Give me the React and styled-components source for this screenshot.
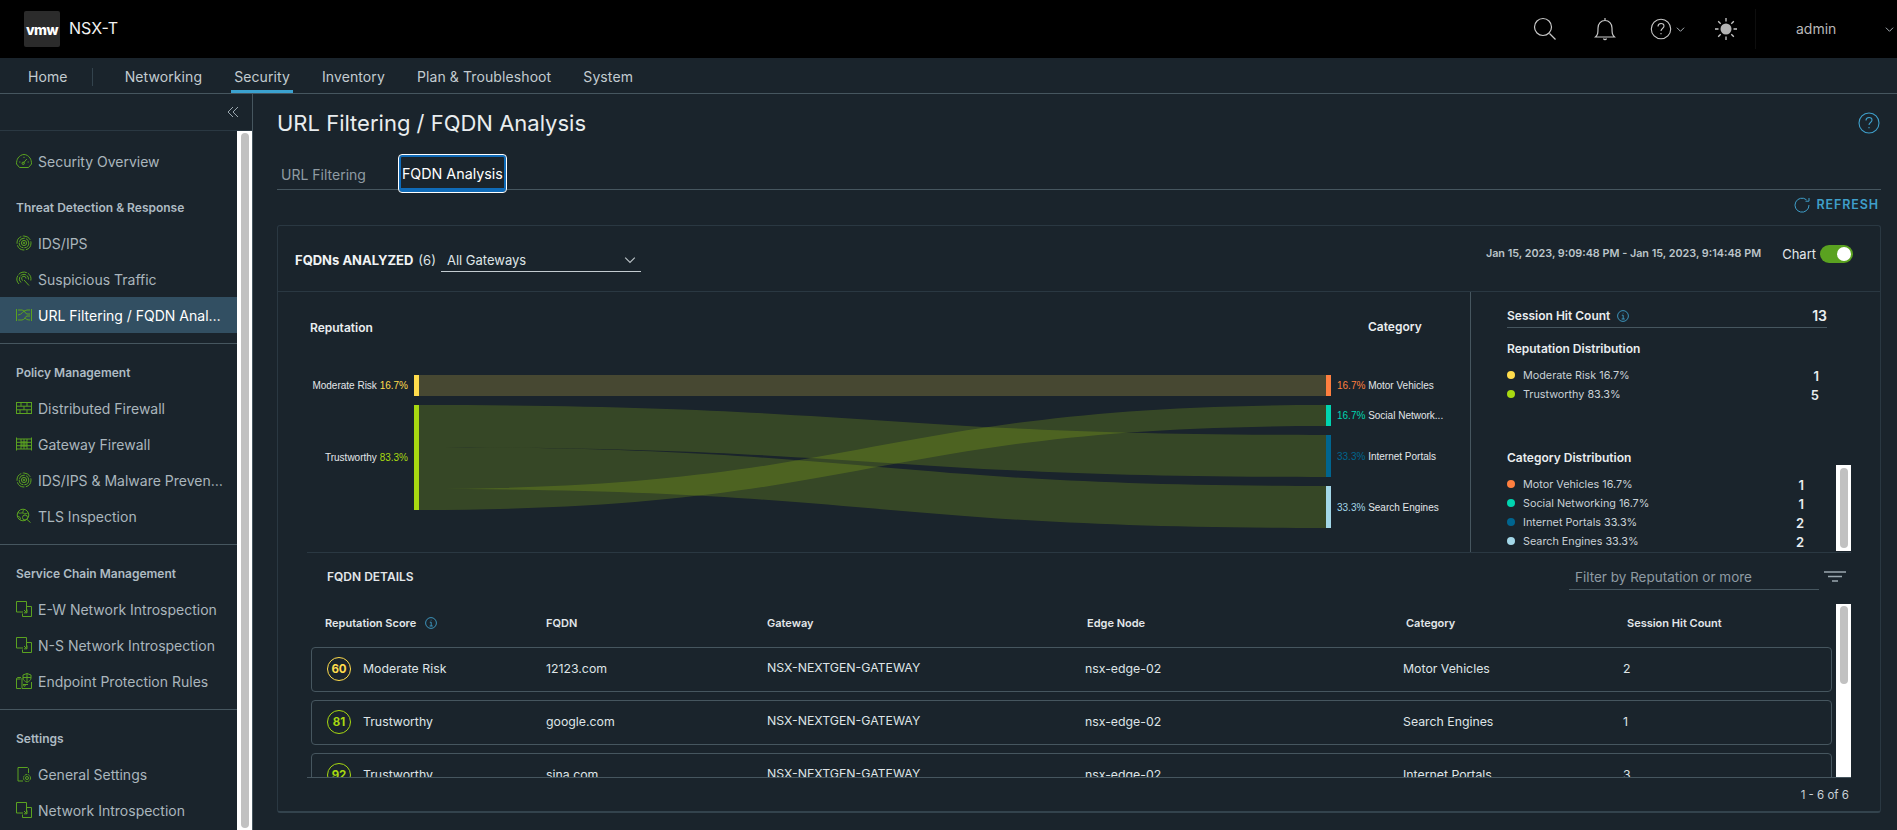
import React from 'react';
import styled, { createGlobalStyle } from 'styled-components';

const BG = '#1a242c';
const LINE = '#46565f';
const FAINT = '#2a3842';
const BLUE = '#3f9fca';
const GREEN = '#5aa220';

const GlobalStyle = createGlobalStyle`
  html, body {
    margin: 0;
    height: 100%;
    background: ${BG};
    overflow: hidden;
  }
  body {
    font-family: Inter, "Noto Sans", "Liberation Sans", sans-serif;
    color: #dfe4e7;
  }
  * {
    box-sizing: border-box;
  }
`;

const sections = [
  { items: [{ icon: 'gauge', label: 'Security Overview' }] },
  {
    title: 'Threat Detection & Response',
    items: [
      { icon: 'rings', label: 'IDS/IPS' },
      { icon: 'radar', label: 'Suspicious Traffic' },
      { icon: 'sankey', label: 'URL Filtering / FQDN Analysis', active: true },
    ],
  },
  {
    title: 'Policy Management',
    line: true,
    items: [
      { icon: 'brick', label: 'Distributed Firewall' },
      { icon: 'gate', label: 'Gateway Firewall' },
      { icon: 'rings', label: 'IDS/IPS & Malware Prevention' },
      { icon: 'globe', label: 'TLS Inspection' },
    ],
  },
  {
    title: 'Service Chain Management',
    line: true,
    items: [
      { icon: 'boxes', label: 'E-W Network Introspection' },
      { icon: 'boxes', label: 'N-S Network Introspection' },
      { icon: 'shield', label: 'Endpoint Protection Rules' },
    ],
  },
  {
    title: 'Settings',
    line: true,
    items: [
      { icon: 'gear', label: 'General Settings' },
      { icon: 'boxes', label: 'Network Introspection' },
    ],
  },
];

const iconShapes = {
  gauge: (
    <>
      <path d="M3.500 14.500h9l3-3.500c0-2.500-.5-4.500-1.500-6C12.500 3 10.500 1.500 8 1.500S3.500 3 2 5C1 6.500.5 8.500.5 11z" />
      <path d="M7 10.500l3.800-4.500M8 3.800v1.200M3.200 9h1.200M11.600 9h1.200" />
      <circle cx="7.200" cy="10.300" r="1.200" />
    </>
  ),
  rings: (
    <>
      <circle cx="8" cy="8" r="7" strokeDasharray="9 1.500" />
      <circle cx="8" cy="8" r="4.800" strokeDasharray="7 1" />
      <circle cx="8" cy="8" r="2.600" />
      <circle cx="8" cy="8" r=".8" />
    </>
  ),
  radar: (
    <>
      <path d="M3 13A7 7 0 1 1 14.800 9.500" strokeDasharray="9 1.200" />
      <path d="M5 11.500A4.600 4.600 0 1 1 12.500 8.500" strokeDasharray="6 1" />
      <path d="M7 9.500A2.200 2.200 0 1 1 10 7.500M8 9l5 5.500" />
    </>
  ),
  sankey: (
    <>
      <path d="M.5 2v12M15.500 2v12M2 3h4c3 0 3 4 5 4h3M2 13h4c3 0 3-4 5-4h3M2 8c4 0 5-5 9-5h3M9 11c1 1 2 2 5 2" />
    </>
  ),
  brick: (
    <>
      <rect x=".5" y="2.500" width="15" height="11" />
      <path d="M.5 6.200h15M.5 9.800h15M5 2.500v3.700M11 2.500v3.700M8 6.200v3.600M4 9.800v3.700M11 9.800v3.700" />
    </>
  ),
  gate: (
    <>
      <path d="M.5 1.500v13M15.500 1.500v13M.5 3h15M.5 13h15M.5 6.300h15M.5 9.700h15M5 3v10M8 3v10M11 3v10" />
      <rect x="5" y="5" width="6" height="6" fill={GREEN} fillOpacity=".5" stroke="none" />
    </>
  ),
  globe: (
    <>
      <circle cx="7" cy="7" r="5.800" />
      <path d="M2 4.500c2 1.500 3 0 5 .5M8 1.500C6 4 7 6 9 5.800c2 0 2.500-1 3-1M1.500 8.500c2-.5 3 1 3 3" />
      <circle cx="9" cy="9.500" r="2.500" />
      <path d="M11 11.500l3.500 3" />
    </>
  ),
  boxes: (
    <>
      <path d="M10.500 10.500V.5H.5v10.500h6.500" />
      <path d="M11 5.500h4.500v10h-9v-3" />
      <path d="M8 9l2.800 2.800M11 8.500v3.300H8" />
    </>
  ),
  shield: (
    <>
      <path d="M5 4.500H1.500l-1 1v10h4.500M.5 6h4M6 15.500h9.500V9M6 5v10.500M7 11.500h5" />
      <path d="M7 2l4-1.500L15 2v3c0 2-2 3.500-4 4.500C9 8.500 7 7 7 5zM11 .5v9M7 4.500h8" />
      <circle cx="8.500" cy="12.500" r=".8" />
    </>
  ),
  gear: (
    <>
      <path d="M7 15H2V1.500h9.500l1 1V7" />
      <circle cx="11" cy="12" r="3.500" strokeDasharray="2 .8" />
      <circle cx="11" cy="12" r="1.500" />
    </>
  ),
};

const rows = [
  { score: 60, color: '#ffdc4c', name: 'Moderate Risk', fqdn: '12123.com', category: 'Motor Vehicles', hits: 2 },
  { score: 81, color: '#a8d911', name: 'Trustworthy', fqdn: 'google.com', category: 'Search Engines', hits: 1 },
  { score: 92, color: '#a8d911', name: 'Trustworthy', fqdn: 'sina.com', category: 'Internet Portals', hits: 3 },
];

const flows = [
  { from: [375, 396], to: [375, 396], color: '#ffdc4c' },
  { from: [405, 447], to: [435, 477], color: '#a8d911' },
  { from: [447, 489], to: [486, 528], color: '#a8d911' },
  { from: [489, 510], to: [405, 426], color: '#a8d911' },
];

const leftNodes = [
  { y: 375, h: 21, color: '#ffdc4c', name: 'Moderate Risk', pct: '16.7%' },
  { y: 405, h: 105, color: '#a8d911', name: 'Trustworthy', pct: '83.3%' },
];

const rightNodes = [
  { y: 375, h: 21, color: '#ff7f3f', name: 'Motor Vehicles', pct: '16.7%' },
  { y: 405, h: 21, color: '#00d4b0', name: 'Social Network...', pct: '16.7%' },
  { y: 435, h: 42, color: '#00658f', name: 'Internet Portals', pct: '33.3%' },
  { y: 486, h: 42, color: '#a3d7e8', name: 'Search Engines', pct: '33.3%' },
];

const flowPath = ({ from, to }) => {
  const a = 419;
  const b = 1326;
  const m = (a + b) / 2;
  return `M${a} ${from[0]}C${m} ${from[0]} ${m} ${to[0]} ${b} ${to[0]}V${to[1]}C${m} ${to[1]} ${m} ${from[1]} ${a} ${from[1]}Z`;
};

const SideIcon = ({ name }) => (
  <IconSvg viewBox="0 0 16 16" fill="none" stroke={GREEN} strokeWidth="1">
    {iconShapes[name]}
  </IconSvg>
);

const Chevron = ({ size = 10, color = '#b8c0c5' }) => (
  <svg width={size} height={size} viewBox="0 0 10 10" fill="none" stroke={color} strokeWidth="1">
    <path d="M1 3l4 4 4-4" />
  </svg>
);

const InfoIcon = () => (
  <svg width="12" height="12" viewBox="0 0 12 12" fill="none" stroke={BLUE} strokeWidth=".9">
    <circle cx="6" cy="6" r="5.400" />
    <path d="M4.800 5.200H6.200V9M4.600 9h3.200M5.800 3.200h.6" />
  </svg>
);

const Sankey = () => (
  <ChartSvg viewBox="307 292 1163 260">
    <ChartTitle x="310" y="332">Reputation</ChartTitle>
    <ChartTitle x="1368" y="331">Category</ChartTitle>
    {flows.map((f, i) => (
      <path key={i} d={flowPath(f)} fill={f.color} fillOpacity=".2" />
    ))}
    {leftNodes.map((n) => (
      <g key={n.name}>
        <rect x="414" y={n.y} width="5" height={n.h} fill={n.color} />
        <NodeLabel x="408" y={n.y + n.h / 2 + 3.5} textAnchor="end">
          {n.name} <tspan fill={n.color}>{n.pct}</tspan>
        </NodeLabel>
      </g>
    ))}
    {rightNodes.map((n) => (
      <g key={n.name}>
        <rect x="1326" y={n.y} width="5" height={n.h} fill={n.color} />
        <NodeLabel x="1337" y={n.y + n.h / 2 + 3.5}>
          <tspan fill={n.color}>{n.pct}</tspan> {n.name}
        </NodeLabel>
      </g>
    ))}
  </ChartSvg>
);

const Distribution = ({ items, countInset }) => (
  <DistList>
    {items.map((it) => (
      <DistRow key={it.label} $inset={countInset}>
        <Dot $color={it.color} />
        <span>{it.label}</span>
        <DistCount>{it.count}</DistCount>
      </DistRow>
    ))}
  </DistList>
);

export default function App() {
  return (
    <Page>
      <GlobalStyle />
      <TopBar>
        <LogoBox>vmw</LogoBox>
        <Product>NSX-T</Product>
        <TopActions>
          <TopIcon $gap={0}>
            <svg width="24" height="24" viewBox="0 0 24 24" fill="none" stroke="#c8c8c8" strokeWidth="1.2">
              <circle cx="10" cy="10" r="8.5" />
              <path d="M16.500 16.500l6 6" />
            </svg>
          </TopIcon>
          <TopIcon $gap={36}>
            <svg width="24" height="24" viewBox="0 0 24 24" fill="none" stroke="#c8c8c8" strokeWidth="1.2">
              <path d="M2.500 20c2.500-2.500 2.500-4 2.500-9 0-4.500 3-7.500 7-7.500s7 3 7 7.500c0 5 0 6.500 2.500 9zM12 1v2.500M10.500 21.500c.5 1.500 2.500 1.500 3 0" />
            </svg>
          </TopIcon>
          <TopIcon $gap={33}>
            <svg width="22" height="22" viewBox="0 0 22 22" fill="none" stroke="#c8c8c8" strokeWidth="1.1">
              <circle cx="11" cy="11" r="9.7" />
              <path d="M8 8.500c0-4 6-4 6-.5 0 2.500-3 2.500-3 5M11 15v1.200" />
            </svg>
            <Chevron size={9} />
          </TopIcon>
          <TopIcon $gap={29}>
            <svg width="24" height="24" viewBox="0 0 24 24" fill="#b4b4b4" stroke="#c8c8c8" strokeWidth="1.3">
              <circle cx="12" cy="12" r="5.5" stroke="none" />
              <path d="M12 1v3.500M12 19.500V23M1 12h3.500M19.500 12H23M4.200 4.200l2.500 2.500M17.300 17.300l2.500 2.500M19.800 4.200l-2.500 2.500M6.700 17.300l-2.500 2.500" />
            </svg>
          </TopIcon>
          <TopSplit />
          <UserName>admin</UserName>
          <Chevron size={9} />
        </TopActions>
      </TopBar>

      <MainNav>
        <NavItem>Home</NavItem>
        <NavSplit />
        <NavItem>Networking</NavItem>
        <NavItem $active>Security</NavItem>
        <NavItem>Inventory</NavItem>
        <NavItem>Plan &amp; Troubleshoot</NavItem>
        <NavItem>System</NavItem>
      </MainNav>

      <Body>
        <Sidebar>
          <CollapseRow>
            <svg width="12" height="12" viewBox="0 0 12 12" fill="none" stroke="#9aa7af" strokeWidth="1">
              <path d="M6 1L1 6l5 5M11 1L6 6l5 5" />
            </svg>
          </CollapseRow>
          <SideScroll>
            <SideList>
              {sections.map((s, i) => (
                <SideSection key={i} $line={s.line}>
                  {s.title && <SideHeading>{s.title}</SideHeading>}
                  {s.items.map((it) => (
                    <SideItem key={it.label} $active={it.active}>
                      <SideIcon name={it.icon} />
                      <SideLabel>{it.label}</SideLabel>
                    </SideItem>
                  ))}
                </SideSection>
              ))}
            </SideList>
            <Track>
              <Thumb />
            </Track>
          </SideScroll>
        </Sidebar>

        <Content>
          <TitleRow>
            <PageTitle>URL Filtering / FQDN Analysis</PageTitle>
            <svg width="22" height="22" viewBox="0 0 22 22" fill="none" stroke={BLUE} strokeWidth="1.1">
              <circle cx="11" cy="11" r="10" />
              <path d="M8 8.500c0-4 6-4 6-.5 0 2.500-3 2.500-3 5M11 15v1.300" />
            </svg>
          </TitleRow>

          <TabBar>
            <Tab>URL Filtering</Tab>
            <Tab $active>FQDN Analysis</Tab>
          </TabBar>

          <RefreshRow>
            <svg width="16" height="16" viewBox="0 0 16 16" fill="none" stroke={BLUE} strokeWidth="1">
              <path d="M12.500 2.800A7 7 0 1 0 15 8M15 1v3.200h-3.500" />
            </svg>
            <RefreshText>REFRESH</RefreshText>
          </RefreshRow>

          <Card>
            <CardHead>
              <CardTitle>FQDNs ANALYZED</CardTitle>
              <CardCount>(6)</CardCount>
              <GatewaySelect>
                All Gateways
                <Chevron size={12} />
              </GatewaySelect>
              <TimeRange>Jan 15, 2023, 9:09:48 PM - Jan 15, 2023, 9:14:48 PM</TimeRange>
              <ChartLabel>Chart</ChartLabel>
              <Toggle />
            </CardHead>

            <ChartRow>
              <Sankey />
              <Summary>
                <TotalRow>
                  <StatTitle>Session Hit Count</StatTitle>
                  <InfoIcon />
                  <TotalValue>13</TotalValue>
                </TotalRow>
                <StatHeading>Reputation Distribution</StatHeading>
                <Distribution
                  countInset={8}
                  items={[
                    { color: '#ffdc4c', label: 'Moderate Risk 16.7%', count: 1 },
                    { color: '#a8d911', label: 'Trustworthy 83.3%', count: 5 },
                  ]}
                />
                <StatHeading $top>Category Distribution</StatHeading>
                <Distribution
                  countInset={23}
                  items={[
                    { color: '#ff7f3f', label: 'Motor Vehicles 16.7%', count: 1 },
                    { color: '#00d4b0', label: 'Social Networking 16.7%', count: 1 },
                    { color: '#00658f', label: 'Internet Portals 33.3%', count: 2 },
                    { color: '#a3d7e8', label: 'Search Engines 33.3%', count: 2 },
                  ]}
                />
                <SummaryTrack>
                  <Thumb />
                </SummaryTrack>
              </Summary>
            </ChartRow>

            <DetailsHead>
              <DetailsTitle>FQDN DETAILS</DetailsTitle>
              <FilterBox>Filter by Reputation or more</FilterBox>
              <svg width="22" height="11" viewBox="0 0 22 11" fill="none" stroke="#9aa7af" strokeWidth="1.5">
                <path d="M0 1h22M4 5.500h14M8 10h6" />
              </svg>
            </DetailsHead>

            <TableWrap>
              <TableBody>
                <HeadRow>
                  <HeadCell>
                    Reputation Score <InfoIcon />
                  </HeadCell>
                  <HeadCell>FQDN</HeadCell>
                  <HeadCell>Gateway</HeadCell>
                  <HeadCell>Edge Node</HeadCell>
                  <HeadCell>Category</HeadCell>
                  <HeadCell>Session Hit Count</HeadCell>
                </HeadRow>
                {rows.map((r) => (
                  <DataRow key={r.fqdn}>
                    <ScoreCell>
                      <Score $color={r.color}>{r.score}</Score>
                      {r.name}
                    </ScoreCell>
                    <span>{r.fqdn}</span>
                    <Raised>NSX-NEXTGEN-GATEWAY</Raised>
                    <span>nsx-edge-02</span>
                    <span>{r.category}</span>
                    <span>{r.hits}</span>
                  </DataRow>
                ))}
              </TableBody>
              <Track>
                <Thumb $height={78} />
              </Track>
            </TableWrap>

            <CardFoot>1 - 6 of 6</CardFoot>
          </Card>
        </Content>
      </Body>
    </Page>
  );
}

const Page = styled.div`
  display: flex;
  flex-direction: column;
  height: 830px;
  overflow: hidden;
`;

const TopBar = styled.header`
  display: flex;
  align-items: center;
  flex: 0 0 58px;
  padding-left: 24px;
  background: #000;
`;

const LogoBox = styled.div`
  display: flex;
  align-items: center;
  justify-content: center;
  width: 36px;
  height: 36px;
  border-radius: 2px;
  background: #2b2b2b;
  color: #fff;
  font-size: 14px;
  font-weight: 800;
  letter-spacing: -0.6px;
`;

const Product = styled.div`
  margin: -2px 0 0 9px;
  color: #f2f2f2;
  font-size: 16px;
`;

const TopActions = styled.div`
  display: flex;
  align-items: center;
  margin-left: auto;
  padding-right: 3px;
`;

const TopIcon = styled.div`
  display: flex;
  align-items: center;
  gap: 4px;
  margin-left: ${(p) => p.$gap}px;
`;

const TopSplit = styled.div`
  width: 1px;
  height: 40px;
  margin: 0 40px 0 17px;
  background: #0e0e0e;
`;

const UserName = styled.div`
  width: 89px;
  margin-top: -2px;
  color: #b8b8b8;
  font-size: 14px;
`;

const MainNav = styled.nav`
  display: flex;
  flex: 0 0 36px;
  gap: 26px;
  padding-left: 25px;
  border-bottom: 1px solid ${LINE};
`;

const NavItem = styled.a`
  display: flex;
  align-items: center;
  height: 35px;
  margin-bottom: -1px;
  padding: 4px 3px 0;
  border-bottom: 3px solid ${(p) => (p.$active ? '#3ba2d0' : 'transparent')};
  color: #c3ccd1;
  font-size: 14px;
  letter-spacing: 0.1px;
`;

const NavSplit = styled.div`
  width: 1px;
  height: 18px;
  margin: 10px 3px 0 -5px;
  background: #33434d;
`;

const Body = styled.div`
  display: flex;
  flex: 1;
  min-height: 0;
`;

const Sidebar = styled.aside`
  display: flex;
  flex-direction: column;
  flex: 0 0 253px;
  width: 253px;
  min-width: 0;
  border-right: 1px solid ${LINE};
`;

const CollapseRow = styled.div`
  display: flex;
  align-items: center;
  justify-content: flex-end;
  flex: 0 0 37px;
  padding-right: 13px;
  border-bottom: 1px solid ${FAINT};
`;

const SideScroll = styled.div`
  display: flex;
  flex: 1;
  min-height: 0;
`;

const SideList = styled.div`
  flex: 1;
  min-width: 0;
  padding-top: 12px;
  overflow: hidden;
`;

const SideSection = styled.section`
  padding-top: ${(p) => (p.$line ? '10px' : '0')};
  border-top: ${(p) => (p.$line ? `1px solid ${LINE}` : 'none')};

  & + & {
    margin-top: 10px;
  }
`;

const SideHeading = styled.h3`
  display: flex;
  align-items: center;
  height: 36px;
  margin: 0;
  padding-left: 16px;
  color: #aebbc3;
  font-size: 12px;
  font-weight: 600;
`;

const SideItem = styled.a`
  display: flex;
  align-items: center;
  gap: 6px;
  height: 36px;
  padding: 0 14px 0 16px;
  background: ${(p) => (p.$active ? '#324f62' : 'transparent')};
  color: ${(p) => (p.$active ? '#fff' : '#aab6bd')};
  font-size: 14px;
`;

const IconSvg = styled.svg`
  flex: 0 0 16px;
  width: 16px;
  height: 16px;
`;

const SideLabel = styled.span`
  overflow: hidden;
  white-space: nowrap;
  text-overflow: ellipsis;
`;

const Track = styled.div`
  flex: 0 0 15px;
  padding: 2px 3px 2px 4px;
  background: #fff;
`;

const Thumb = styled.div`
  height: ${(p) => (p.$height ? `${p.$height}px` : '100%')};
  border-radius: 4px;
  background: #c1c1c1;
`;

const Content = styled.main`
  flex: 1;
  min-width: 0;
  padding: 0 16px 0 24px;
`;

const TitleRow = styled.div`
  display: flex;
  align-items: center;
  justify-content: space-between;
  height: 58px;
  padding-right: 1px;
`;

const PageTitle = styled.h1`
  margin: 0;
  color: #e9edef;
  font-size: 22px;
  font-weight: 400;
`;

const TabBar = styled.div`
  display: flex;
  gap: 33px;
  height: 38px;
  padding-left: 4px;
  border-bottom: 1px solid ${LINE};
`;

const Tab = styled.button`
  height: 37px;
  margin-top: ${(p) => (p.$active ? '3px' : '0')};
  padding: ${(p) => (p.$active ? '2px 1px 0' : '7px 0 0')};
  border: ${(p) => (p.$active ? '2px solid #0f6bb8' : 'none')};
  border-bottom-width: ${(p) => (p.$active ? '4px' : '0')};
  border-radius: 3px;
  outline: ${(p) => (p.$active ? '1px solid #fff' : 'none')};
  background: transparent;
  color: ${(p) => (p.$active ? '#fff' : '#8f9ba3')};
  font-family: inherit;
  font-size: ${(p) => (p.$active ? '14.3px' : '14px')};
`;

const RefreshRow = styled.div`
  display: flex;
  align-items: center;
  justify-content: flex-end;
  gap: 6px;
  height: 35px;
  padding: 0 2px 6px 0;
`;

const RefreshText = styled.span`
  color: ${BLUE};
  font-size: 12.5px;
  font-weight: 600;
  letter-spacing: 0.9px;
`;

const Card = styled.section`
  display: flex;
  flex-direction: column;
  height: 588px;
  border: 1px solid ${FAINT};
  border-bottom: 2px solid #33434d;
  border-radius: 3px;
`;

const CardHead = styled.div`
  display: flex;
  align-items: flex-start;
  flex: 0 0 66px;
  padding: 26px 27px 0 17px;
  border-bottom: 1px solid ${FAINT};
`;

const CardTitle = styled.span`
  color: #f1f3f4;
  font-size: 13px;
  font-weight: 700;
  line-height: 17px;
`;

const CardCount = styled.span`
  margin-left: 5px;
  color: #dfe4e7;
  font-size: 13px;
  line-height: 17px;
`;

const GatewaySelect = styled.div`
  display: flex;
  align-items: center;
  justify-content: space-between;
  width: 200px;
  height: 22px;
  margin: -2px 0 0 5px;
  padding: 0 5px 2px 6px;
  border-bottom: 1px solid #c3ccd1;
  color: #dfe4e7;
  font-size: 13px;
`;

const TimeRange = styled.span`
  margin: -7px 0 0 auto;
  color: #bcc5ca;
  font-size: 10.8px;
  font-weight: 600;
  line-height: 17px;
`;

const ChartLabel = styled.span`
  margin: -6px 4px 0 21px;
  color: #e3e7ea;
  font-size: 13px;
  line-height: 17px;
`;

const Toggle = styled.span`
  position: relative;
  width: 33px;
  height: 18px;
  margin-top: -7px;
  border-radius: 9px;
  background: ${GREEN};

  &::after {
    content: '';
    position: absolute;
    top: 2px;
    right: 2px;
    width: 14px;
    height: 14px;
    border-radius: 50%;
    background: #fff;
  }
`;

const ChartRow = styled.div`
  display: flex;
  flex: 0 0 261px;
  min-height: 0;
  margin: 0 29px;
  border-bottom: 1px solid ${FAINT};
`;

const ChartSvg = styled.svg`
  flex: 0 0 1163px;
  width: 1163px;
  height: 260px;
`;

const ChartTitle = styled.text`
  fill: #e9edef;
  font-size: 12px;
  font-weight: 600;
`;

const NodeLabel = styled.text`
  fill: #e3e7ea;
  font-family: 'Liberation Sans', sans-serif;
  font-size: 10px;
`;

const Summary = styled.div`
  position: relative;
  flex: 1;
  padding: 15px 24px 0 36px;
  border-left: 1px solid ${LINE};
`;

const TotalRow = styled.div`
  display: flex;
  align-items: center;
  gap: 7px;
  height: 21px;
  padding-bottom: 3px;
  border-bottom: 1px solid ${LINE};
`;

const StatTitle = styled.span`
  color: #e9edef;
  font-size: 12px;
  font-weight: 600;
`;

const TotalValue = styled.span`
  margin-left: auto;
  color: #e9edef;
  font-size: 14px;
  font-weight: 600;
`;

const StatHeading = styled.div`
  margin-top: ${(p) => (p.$top ? '45px' : '12px')};
  color: #e9edef;
  font-size: 12px;
  font-weight: 600;
  line-height: 17px;
`;

const DistList = styled.div`
  margin-top: 9px;
`;

const DistRow = styled.div`
  display: flex;
  align-items: center;
  height: 19px;
  padding-right: ${(p) => p.$inset}px;
  color: #c9d1d6;
  font-size: 10.8px;
`;

const Dot = styled.i`
  width: 8px;
  height: 8px;
  margin: -2px 8px 0 0;
  border-radius: 50%;
  background: ${(p) => p.$color};
`;

const DistCount = styled.b`
  margin-left: auto;
  color: #e9edef;
  font-size: 13px;
  font-weight: 600;
`;

const SummaryTrack = styled.div`
  position: absolute;
  top: 173px;
  right: 0;
  width: 15px;
  height: 86px;
  padding: 3px 3px 3px 4px;
  background: #fff;
`;

const DetailsHead = styled.div`
  display: flex;
  align-items: center;
  flex: 0 0 51px;
  margin: 0 29px;
  padding: 0 5px 4px 20px;
`;

const DetailsTitle = styled.h4`
  margin: 0 auto 0 0;
  color: #e3e7ea;
  font-size: 12px;
  font-weight: 600;
`;

const FilterBox = styled.div`
  display: flex;
  align-items: center;
  width: 250px;
  height: 26px;
  margin: 0 5px 0 0;
  padding: 2px 6px 0;
  border-bottom: 1px solid ${LINE};
  color: #8f9ba3;
  font-size: 13.5px;
`;

const TableWrap = styled.div`
  display: flex;
  flex: 0 0 174px;
  height: 174px;
  min-height: 0;
  margin: 0 29px;
  border-bottom: 1px solid ${LINE};
`;

const TableBody = styled.div`
  flex: 1;
  min-width: 0;
  padding: 0 4px;
  overflow: hidden;
`;

const HeadRow = styled.div`
  display: grid;
  grid-template-columns: 221px 221px 320px 319px 221px 1fr;
  align-items: center;
  height: 38px;
  margin-bottom: 5px;
  padding-left: 14px;
`;

const HeadCell = styled.span`
  display: flex;
  align-items: center;
  gap: 9px;
  color: #e3e7ea;
  font-size: 11px;
  font-weight: 600;
`;

const DataRow = styled.div`
  display: grid;
  grid-template-columns: 219px 221px 318px 318px 220px 1fr;
  align-items: center;
  height: 45px;
  margin-bottom: 8px;
  padding: 0 0 2px 15px;
  border: 1px solid ${LINE};
  border-radius: 4px;
  color: #dfe4e7;
  font-size: 12.3px;
`;

const ScoreCell = styled.span`
  display: flex;
  align-items: center;
  gap: 12px;
`;

const Score = styled.span`
  display: flex;
  align-items: center;
  justify-content: center;
  width: 24px;
  height: 24px;
  border: 1.5px solid ${(p) => p.$color};
  border-radius: 50%;
  color: ${(p) => p.$color};
  font-size: 11.5px;
  font-weight: 700;
`;

const Raised = styled.span`
  margin-top: -2px;
`;

const CardFoot = styled.div`
  flex: 1;
  padding: 10px 31px 0 0;
  color: #c9d1d6;
  font-size: 11.5px;
  text-align: right;
`;
